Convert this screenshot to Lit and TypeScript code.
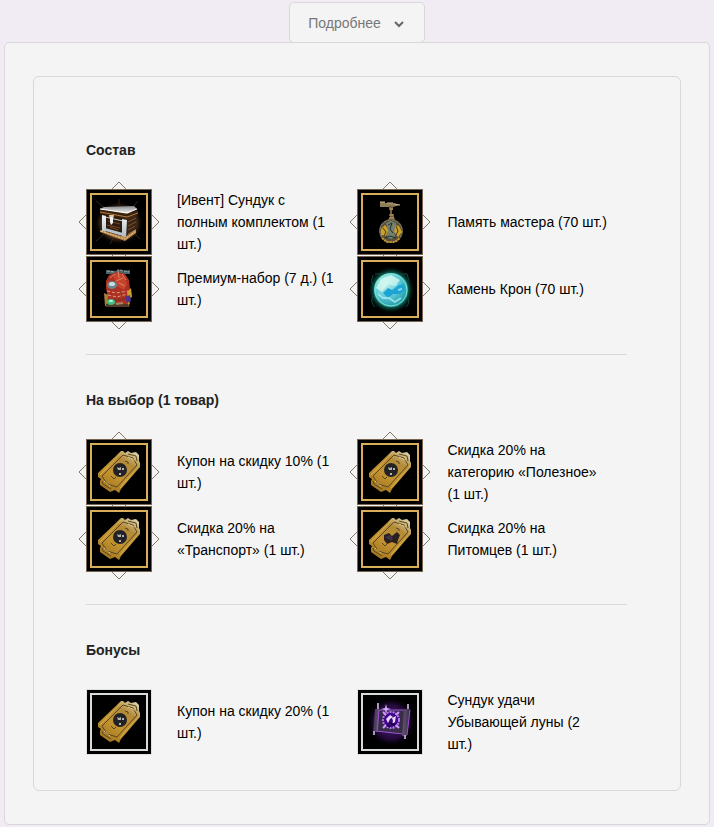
import { LitElement, html, svg, css, nothing } from "lit";
import { customElement, property, state } from "lit/decorators.js";
import { classMap } from "lit/directives/class-map.js";

type Art = "chest" | "premium" | "pendant" | "crystal" | "coupon" | "petCoupon" | "scroll";

interface Item {
  name: string;
  art: Art;
}

interface Section {
  title: string;
  tone: "gold" | "silver";
  items: Item[];
}

const SECTIONS: Section[] = [
  {
    title: "Состав",
    tone: "gold",
    items: [
      { name: "[Ивент] Сундук с полным комплектом (1 шт.)", art: "chest" },
      { name: "Память мастера (70 шт.)", art: "pendant" },
      { name: "Премиум-набор (7 д.) (1 шт.)", art: "premium" },
      { name: "Камень Крон (70 шт.)", art: "crystal" },
    ],
  },
  {
    title: "На выбор (1 товар)",
    tone: "gold",
    items: [
      { name: "Купон на скидку 10% (1 шт.)", art: "coupon" },
      { name: "Скидка 20% на категорию «Полезное» (1 шт.)", art: "coupon" },
      { name: "Скидка 20% на «Транспорт» (1 шт.)", art: "coupon" },
      { name: "Скидка 20% на Питомцев (1 шт.)", art: "petCoupon" },
    ],
  },
  {
    title: "Бонусы",
    tone: "silver",
    items: [
      { name: "Купон на скидку 20% (1 шт.)", art: "coupon" },
      { name: "Сундук удачи Убывающей луны (2 шт.)", art: "scroll" },
    ],
  },
];

const chest = () => svg`
  <defs>
    <radialGradient id="halo"><stop offset="0.6" stop-color="#9a6a3a"/><stop offset="1" stop-color="#000" stop-opacity="0"/></radialGradient>
    <linearGradient id="lid" x1="0" y1="0" x2="0" y2="1"><stop offset="0" stop-color="#85878b"/><stop offset="1" stop-color="#f1f1ee"/></linearGradient>
    <linearGradient id="post" x1="0" y1="0" x2="0" y2="1"><stop offset="0" stop-color="#f4f6f6"/><stop offset="1" stop-color="#a9b9c2"/></linearGradient>
  </defs>
  <ellipse cx="33" cy="34" rx="25" ry="22" fill="url(#halo)" opacity="0.8"/>
  <path d="M10 12 20 20M52 12 46 19M33 10V16M10 52 18 45M54 50 48 44M24 55 27 50" stroke="#4d3421" stroke-width="1" opacity="0.7"/>
  <path d="M16 25 41 30 39 50 16 42Z" fill="#2c1b0e"/>
  <path d="M41 30 51 26 50 41 39 50Z" fill="#3a2415"/>
  <path d="M42 33 50 29M42 37 50 33M42 41 49 37M42 45 49 41" stroke="#7b5430" stroke-width="1"/>
  <path d="M22 32 34 35M21 36 34 39M24 38 32 41" stroke="#6e4823" stroke-width="1"/>
  <path d="M16 26 20 27 20 43 16 42ZM36 30 41 31 40 49 36 48Z" fill="url(#post)"/>
  <path d="M19 39 37 44 37 47 19 42Z" fill="#b9c4ca"/>
  <path d="M19 28 37 32" stroke="#c9cdcc" stroke-width="1"/>
  <path d="M14 41 39 48 50 40 50 44 39 52 14 43Z" fill="#b58449"/>
  <path d="M15 42 39 50 50 42" fill="none" stroke="#efca8b" stroke-width="1" stroke-dasharray="2 1"/>
  <path d="M14 20 41 25 52 21 52 25 41 30 14 25Z" fill="#38230f"/>
  <path d="M14 23 41 28 52 24" fill="none" stroke="#b27c40" stroke-width="1"/>
  <path d="M14 20 18 18 48 17 51 20 41 24Z" fill="url(#lid)"/>
  <path d="M14 20 41 24 51 20" fill="none" stroke="#fff" stroke-width="1"/>
  <path d="M23 26h5l-1 4v4l-2 2-1-3v-3z" fill="#eef0ed"/>
  <path d="M23 27h5" stroke="#d99d46" stroke-width="1"/>
`;

const premium = () => svg`
  <path d="M20 14 30 15 32 13 36 15 44 14 44 18 20 18Z" fill="#4d6367"/>
  <path d="M21 15 28 16M34 14 43 16" stroke="#93adaf" stroke-width="1" stroke-dasharray="3 1"/>
  <path d="M20 25 23 19 31 16 39 18 43 24 44 34 42 40 44 48 23 49 19 44 21 37 20 32Z" fill="#ad3123"/>
  <path d="M27 19 32 16 38 20 41 28 38 34 31 30Z" fill="#c8432d"/>
  <path d="M32 14 33 22M24 22 29 18M36 18 40 24M30 25 37 22M33 27 39 30" stroke="#dc8562" stroke-width="1"/>
  <path d="M21 35 30 37 42 35M22 39 31 41 41 38" fill="none" stroke="#d9a083" stroke-width="1" stroke-dasharray="3 2"/>
  <path d="M28 44 40 43" stroke="#8a2c20" stroke-width="2" stroke-dasharray="3 1"/>
  <ellipse cx="26" cy="29" rx="5" ry="4" fill="#6e858d"/>
  <ellipse cx="26" cy="28" rx="3" ry="2" fill="#c9dee3"/>
  <path d="M18 37 22 39 21 50 19 50Z" fill="#a6803a"/>
  <path d="M20 48 42 48 44 51 20 51Z" fill="#523b27"/>
  <path d="M41 36 45 32 46 41 42 43ZM41 46 44 44 43 50Z" fill="#cda033"/>
  <path d="M39 41 44 39 45 45 41 47Z" fill="#4b3190"/>
  <ellipse cx="25" cy="46" rx="4" ry="3" fill="#41be83"/>
  <ellipse cx="25" cy="45" rx="2" ry="1" fill="#b7ffe0"/>
  <path d="M30 48 37 47" stroke="#a48a66" stroke-width="2"/>
`;

const pendant = () => svg`
  <path d="M23 13h5v5h-5zM28 14h8l7 2-7 2h-8z" fill="#8f7c59"/>
  <path d="M23 13h5M30 14h6M37 15 43 16" stroke="#c5b58b" stroke-width="1"/>
  <path d="M32 17h4v4h-1v4h2v3l2 4h-9l3-4v-7h-1z" fill="#77603e"/>
  <path d="M33 20h3M32 26h4M32 29h5" stroke="#c4a66e" stroke-width="1"/>
  <circle cx="34" cy="42" r="12" fill="#57503c"/>
  <circle cx="34" cy="42" r="11" fill="none" stroke="#8b8467" stroke-width="1" stroke-dasharray="3 1"/>
  <path d="M24 40 28 36 32 41 29 47 24 46ZM38 36 42 37 45 43 41 48 37 43Z" fill="#caa02b"/>
  <path d="M26 39 29 43 27 47M39 37 41 42 39 46" fill="none" stroke="#4a3513" stroke-width="1"/>
  <path d="M29 34 34 32 39 34 37 42 38 48 34 50 30 48 31 42Z" fill="#71806f"/>
  <path d="M31 36 35 34 33 40 36 44M28 49 33 47 39 49" fill="none" stroke="#272d2a" stroke-width="1"/>
  <path d="M25 49 30 53 38 53 43 49" fill="none" stroke="#c5932b" stroke-width="2" stroke-dasharray="2 1"/>
`;

const crystal = () => svg`
  <defs>
    <radialGradient id="aura"><stop offset="0.65" stop-color="#18917b"/><stop offset="1" stop-color="#000" stop-opacity="0"/></radialGradient>
    <radialGradient id="orb" cx="0.35" cy="0.3" r="0.75"><stop offset="0" stop-color="#c9f4ed"/><stop offset="0.5" stop-color="#62cddb"/><stop offset="1" stop-color="#1c939f"/></radialGradient>
  </defs>
  <circle cx="34" cy="34" r="24" fill="url(#aura)"/>
  <path d="M16 19q-3 6 0 11M50 18q3 5 0 11M16 40q-3 7 2 11M50 40q4 7-1 11M18 18h9M42 18h8" fill="none" stroke="#12483f" stroke-width="1"/>
  <circle cx="34" cy="34" r="17" fill="url(#orb)"/>
  <path d="M19 32 24 23 34 19 43 24 38 30 31 28 25 36Z" fill="#d4f7ef" opacity="0.8"/>
  <path d="M26 37 31 32 35 34 42 29 47 28 48 34 43 38 36 38 31 42Z" fill="#1ba4d4"/>
  <path d="M21 38 26 42 32 42 38 46 44 42M36 26 40 28M41 34 45 33" fill="none" stroke="#b4f1f8" stroke-width="2" opacity="0.7"/>
  <circle cx="34" cy="34" r="16" fill="none" stroke="#7be6cf" stroke-width="1"/>
`;

const ticket = (emblem: unknown) => svg`
  <defs>
    <linearGradient id="foil" x1="0.8" y1="0" x2="0.2" y2="1"><stop offset="0" stop-color="#d9cda4"/><stop offset="0.25" stop-color="#b38b38"/><stop offset="0.6" stop-color="#c2932f"/><stop offset="1" stop-color="#a0721e"/></linearGradient>
  </defs>
  <path d="M35 12 37 12 39 14 42 12 45 14 50 13 53 16 53 22 54 24 54 28 35 50 33 54 29 51 24 53 14 46 14 42 15 40 12 38 12 34Z" fill="url(#foil)"/>
  <path d="M37 16 47 19 51 26 31 48 21 45 16 37Z" fill="none" stroke="#5a4720" stroke-width="1"/>
  <path d="M42 15 50 17 51 22M16 42 17 45 25 50" fill="none" stroke="#5a4720" stroke-width="1"/>
  <path d="M42 18 49 21M18 42 25 48" stroke="#e0cf96" stroke-width="1" stroke-dasharray="2 1"/>
  <path d="M35 14 14 36M53 27 34 49" stroke="#dcae4b" stroke-width="1"/>
  <path d="M39 22 42 23 42 25M25 37 28 40 30 38" fill="none" stroke="#5a4720" stroke-width="1"/>
  ${emblem}
`;

const seal = svg`
  <circle cx="34" cy="31" r="7" fill="#232327"/>
  <path d="M31 28 32 31 35 31 35 28 33 29ZM36 29h2v2h-2zM33 34h2v2h-2z" fill="#b5b4af"/>
`;

const paw = svg`
  <path d="M27 29 32 27 35 30 40 26 43 29 41 34 40 38 35 36 30 38 27 34Z" fill="#2a211f"/>
  <path d="M28 31 33 29 36 32 34 35Z" fill="#40304a"/>
`;

const scroll = () => svg`
  <defs>
    <radialGradient id="mist"><stop offset="0" stop-color="#7a35b8"/><stop offset="0.7" stop-color="#300d4d"/><stop offset="1" stop-color="#000" stop-opacity="0"/></radialGradient>
    <linearGradient id="rod"><stop offset="0" stop-color="#403654"/><stop offset="0.5" stop-color="#9488a3"/><stop offset="1" stop-color="#3a2e49"/></linearGradient>
  </defs>
  <ellipse cx="34" cy="33" rx="25" ry="25" fill="url(#mist)" opacity="0.7"/>
  <path d="M20 18 48 18 46 42 19 39Z" transform="translate(0 3)" fill="#392c48"/>
  <g transform="translate(0 3)">
    <path d="M20 18 48 18M19 39 46 42" stroke="#9a55d8" stroke-width="1"/>
    <path d="M18 17h4l-1 23h-5zM47 17h6l-3 27h-5z" fill="url(#rod)"/>
    <path d="M22 18 20 40M50 43 53 18" stroke="#a04ad8" stroke-width="1"/>
    <path d="M21 11v6M51 12v5M17 39v4M48 43v4" stroke="#a99abb" stroke-width="2"/>
    <circle cx="34" cy="28" r="8" fill="#3f0784" stroke="#b67bf6" stroke-width="2" stroke-dasharray="2 1"/>
    <path d="M26 20 29 23M42 20 39 23M26 36 29 33M42 36 39 33" stroke="#cf9aff" stroke-width="2"/>
    <path d="M29 27 33 23 36 25 33 27 31 31ZM35 26 39 24 38 30 35 32 36 29Z" fill="#e8d7ff"/>
    <path d="M33 31 38 33M30 33 33 35" stroke="#1b0044" stroke-width="2"/>
    <path d="M29 12 30 16 34 17 30 18 29 22 28 18 24 17 28 16Z" fill="#d7adff"/>
  </g>
`;

const ART: Record<Art, () => unknown> = {
  chest,
  premium,
  pendant,
  crystal,
  coupon: () => ticket(seal),
  petCoupon: () => ticket(paw),
  scroll,
};

@customElement("item-tile")
class ItemTile extends LitElement {
  @property() art: Art = "coupon";
  @property() tone: "gold" | "silver" = "gold";

  static styles = css`
    :host {
      display: block;
      position: relative;
      flex: none;
      width: 66px;
      height: 66px;
    }
    .face {
      display: block;
      width: 66px;
      height: 66px;
    }
    .points {
      position: absolute;
      z-index: -1;
      left: -9px;
      top: -9px;
      width: 84px;
      height: 84px;
      fill: none;
      stroke: #857563;
      stroke-width: 1;
    }
    .outer {
      fill: #000;
      stroke: #75644f;
    }
    .inner {
      fill: none;
      stroke: #d9ad59;
      stroke-width: 2;
    }
    .silver .outer {
      stroke: #dfe2df;
    }
    .silver .inner {
      stroke: #d8dcd9;
    }
  `;

  render() {
    const gold = this.tone === "gold";
    return html`
      ${gold
        ? html`<svg class="points" viewBox="0 0 84 84" aria-hidden="true">
            <path d="M42 2 51 11 42 20 33 11ZM42 64 51 73 42 82 33 73ZM2 42 11 33 20 42 11 51ZM64 42 73 33 82 42 73 51Z" />
          </svg>`
        : nothing}
      <svg class=${classMap({ face: true, silver: !gold })} viewBox="0 0 66 66" aria-hidden="true">
        <rect class="outer" x="0.5" y="0.5" width="65" height="65" />
        ${ART[this.art]()}
        <rect class="inner" x="5" y="5" width="56" height="56" />
      </svg>
    `;
  }
}

@customElement("app-root")
class AppRoot extends LitElement {
  @state() private open = true;

  static styles = css`
    :host {
      display: block;
      box-sizing: border-box;
      min-height: 100vh;
      padding: 2px 4px;
      background: #f1ecf4;
      color: #222;
      font: 14px/22px "Liberation Sans", Arial, sans-serif;
    }
    .toggle {
      display: flex;
      align-items: center;
      gap: 12px;
      height: 41px;
      margin: 0 auto -1px;
      padding: 0 19px 0 18px;
      border: 1px solid #d8d8d8;
      border-radius: 5px;
      background: #f4f4f4;
      color: #777;
      font: inherit;
      cursor: pointer;
    }
    .chevron {
      width: 12px;
      height: 12px;
      fill: none;
      stroke: #666;
      stroke-width: 2;
    }
    .panel {
      padding: 33px 28px;
      border: 1px solid #d8d8d8;
      border-radius: 5px;
      background: #f4f4f4;
    }
    .card {
      padding: 62px 53px 35px 52px;
      border: 1px solid #d8d8d8;
      border-radius: 6px;
    }
    .section + .section {
      margin-top: 32px;
      padding-top: 34px;
      border-top: 1px solid #d8d8d8;
    }
    .title {
      margin: 0 0 28px;
      font: inherit;
      font-weight: bold;
    }
    .items {
      display: grid;
      grid-template-columns: 1fr 1fr;
      row-gap: 1px;
      isolation: isolate;
      margin: 0;
      padding: 0;
      list-style: none;
    }
    .item {
      display: flex;
      align-items: center;
      gap: 25px;
      padding-right: 20px;
      color: #000;
    }
  `;

  render() {
    return html`
      <button
        class="toggle"
        type="button"
        aria-expanded=${this.open ? "true" : "false"}
        aria-controls="details"
        @click=${() => (this.open = !this.open)}
      >
        Подробнее
        <svg class="chevron" viewBox="0 0 12 12" aria-hidden="true"><path d="M2 5 6 9 10 5" /></svg>
      </button>
      <div class="panel" id="details" ?hidden=${!this.open}>
        <div class="card">
          ${SECTIONS.map(
            (section) => html`
              <section class="section">
                <h2 class="title">${section.title}</h2>
                <ul class="items">
                  ${section.items.map(
                    (item) => html`
                      <li class="item">
                        <item-tile art=${item.art} tone=${section.tone}></item-tile>
                        <span>${item.name}</span>
                      </li>
                    `
                  )}
                </ul>
              </section>
            `
          )}
        </div>
      </div>
    `;
  }
}
